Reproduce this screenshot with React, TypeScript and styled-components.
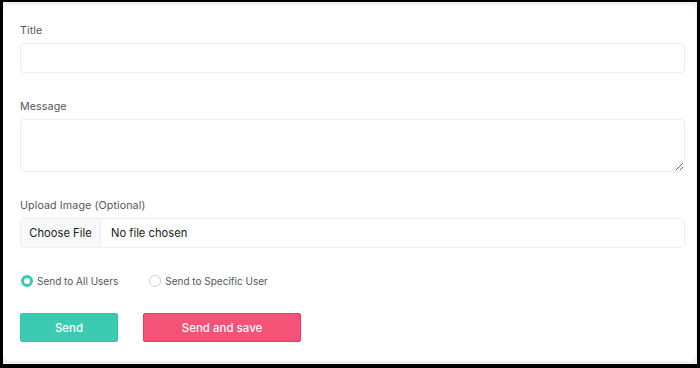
import React from "react";
import styled, { createGlobalStyle } from "styled-components";

const Global = createGlobalStyle`
  html, body { margin: 0; padding: 0; background: #000; }
  * { box-sizing: border-box; }
`;

const Frame = styled.div`
  width: 700px;
  height: 368px;
  background: #000;
  padding: 2px 3px 4px 3px;
  display: flex;
`;

const Page = styled.div`
  flex: 1;
  background: #f1f1f5;
  padding: 3px 1px 3px 0;
  display: flex;
`;

const Card = styled.form`
  flex: 1;
  background: #fff;
  border-radius: 6px;
  padding: 18px 11px 17px 17px;
  font-family: Inter, "Liberation Sans", sans-serif;
`;

const Field = styled.div`
  margin-bottom: 26px;
`;

const Label = styled.label`
  display: block;
  font-size: 10.7px;
  line-height: 16px;
  color: #555660;
  margin-bottom: 4px;
  letter-spacing: 0.1px;
`;

const Input = styled.input`
  display: block;
  width: 100%;
  height: 30px;
  border: 1px solid #eceef4;
  border-radius: 4px;
  background: #fff;
  outline: none;
  padding: 0 10px;
  font: inherit;
`;

const TextArea = styled.textarea`
  display: block;
  width: 100%;
  height: 53px;
  border: 1px solid #eceef4;
  border-radius: 4px;
  background: #fff;
  outline: none;
  padding: 8px 10px;
  font: inherit;
  resize: vertical;
`;

const FileBox = styled.label`
  display: flex;
  align-items: stretch;
  height: 30px;
  border: 1px solid #eceef4;
  border-radius: 4px;
  overflow: hidden;
  font-size: 11.2px;
  color: #222;
  cursor: pointer;
`;

const HiddenFile = styled.input`
  display: none;
`;

const ChooseBtn = styled.span`
  display: flex;
  align-items: center;
  justify-content: center;
  white-space: nowrap;
  width: 80px;
  background: #f8f9fb;
  border-right: 1px solid #eceef4;
`;

const FileName = styled.span`
  display: flex;
  align-items: center;
  padding-left: 10px;
  white-space: nowrap;
`;

const RadioRow = styled.div`
  display: flex;
  align-items: center;
  gap: 30px;
  margin-top: -1px;
  height: 16px;
`;

const RadioLabel = styled.label`
  display: flex;
  align-items: center;
  gap: 4px;
  font-size: 10px;
  color: #555660;
  cursor: pointer;
`;

const Radio = styled.input`
  appearance: none;
  margin: 0 0 0 1px;
  width: 12px;
  height: 12px;
  border-radius: 50%;
  border: 1px solid #cfd1d6;
  background: #fff;
  &:checked {
    border: 3.5px solid #3cc9b0;
  }
`;

const Buttons = styled.div`
  display: flex;
  gap: 25px;
  margin-top: 24px;
`;

const Button = styled.button<{ $tone: "teal" | "pink"; $w: number }>`
  width: ${(p) => p.$w}px;
  height: 29px;
  border-radius: 2px;
  border: 1px solid ${(p) => (p.$tone === "teal" ? "#34c4ab" : "#ef3a69")};
  background: ${(p) => (p.$tone === "teal" ? "#3ccab2" : "#f55277")};
  color: #fff;
  font-family: Inter, "Liberation Sans", sans-serif;
  font-size: 11.5px;
  font-weight: 500;
  cursor: pointer;
  padding: 0;
`;

export default function App() {
  return (
    <>
      <Global />
      <Frame>
        <Page>
          <Card onSubmit={(e) => e.preventDefault()}>
            <Field>
              <Label htmlFor="title">Title</Label>
              <Input id="title" type="text" />
            </Field>
            <Field>
              <Label htmlFor="message">Message</Label>
              <TextArea id="message" />
            </Field>
            <Field>
              <Label>Upload Image (Optional)</Label>
              <FileBox>
                <HiddenFile type="file" />
                <ChooseBtn>Choose File</ChooseBtn>
                <FileName>No file chosen</FileName>
              </FileBox>
            </Field>
            <RadioRow>
              <RadioLabel>
                <Radio type="radio" name="target" defaultChecked />
                Send to All Users
              </RadioLabel>
              <RadioLabel>
                <Radio type="radio" name="target" />
                Send to Specific User
              </RadioLabel>
            </RadioRow>
            <Buttons>
              <Button type="button" $tone="teal" $w={98}>
                Send
              </Button>
              <Button type="button" $tone="pink" $w={158}>
                Send and save
              </Button>
            </Buttons>
          </Card>
        </Page>
      </Frame>
    </>
  );
}
